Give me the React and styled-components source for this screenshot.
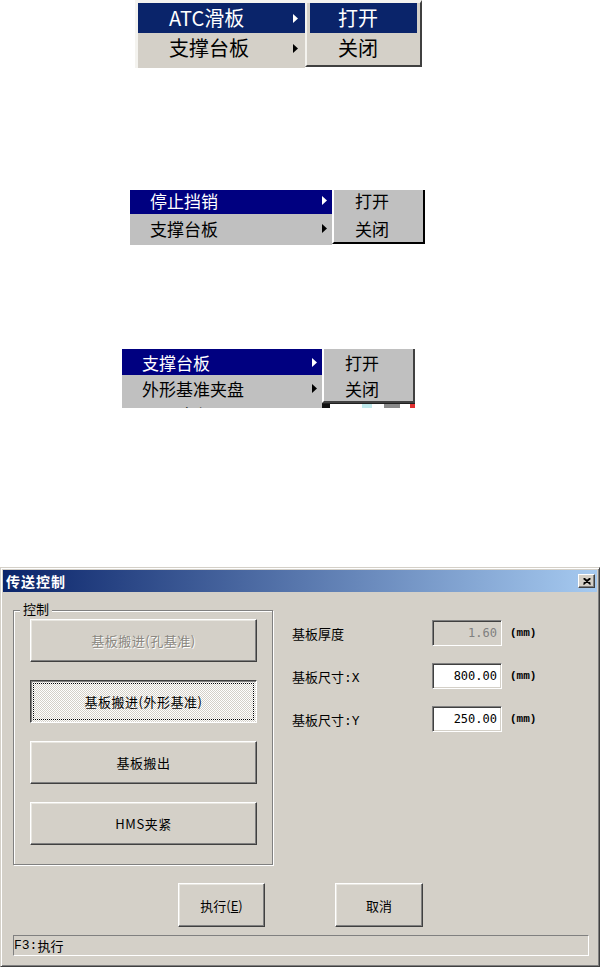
import React from "react";
import styled, { createGlobalStyle } from "styled-components";

const GlobalStyle = createGlobalStyle`
  html, body {
    margin: 0;
    padding: 0;
    background: #fff;
  }
  body {
    font-family: "Noto Sans CJK SC", "Noto Sans", sans-serif;
  }
`;

const Arrow = ({ color }) => (
  <svg width="5" height="9" viewBox="0 0 5 9">
    <polygon points="0,0 5,4.5 0,9" fill={color} />
  </svg>
);

const CloseIcon = () => (
  <svg width="8" height="7" viewBox="0 0 8 7">
    <path d="M0.5 0.5 L7.5 6.5 M1.5 0.5 L7.5 5.5 M7.5 0.5 L0.5 6.5 M6.5 0.5 L0.5 5.5" stroke="#000" strokeWidth="1.2" />
  </svg>
);

const App = () => {
  return (
    <Page>
      <GlobalStyle />

      {/* 菜单截图 1 */}
      <Shot $left={135} $top={0} $height={68}>
        <MainMenu $width={170} $bg="#d4d0c8" $frame={3}>
          <MenuRow $h={30} $font={20} $pad={31} $right={7} $hi="#0a246a">
            <span>ATC滑板</span>
            <Arrow color="#fff" />
          </MenuRow>
          <MenuRow $h={30} $font={20} $pad={31} $right={7}>
            <span>支撑台板</span>
            <Arrow color="#000" />
          </MenuRow>
          <MenuRow $h={30} $font={20} $pad={31} $right={7}>
            <span>外形基准夹盘</span>
          </MenuRow>
        </MainMenu>
        <SubMenu $width={117} $bg="#d4d0c8" $top={3} $side={3} $light="#f4f3ef" $dark="#404040">
          <MenuRow $h={30} $font={20} $pad={28} $hi="#0a246a">
            <span>打开</span>
          </MenuRow>
          <MenuRow $h={30} $font={20} $pad={28}>
            <span>关闭</span>
          </MenuRow>
        </SubMenu>
      </Shot>

      {/* 菜单截图 2 (上边被裁掉一点) */}
      <Shot $left={130} $top={122} $height={55}>
        <MainMenu $width={202} $bg="#c0c0c0" $frame={0}>
          <MenuRow $h={24} $font={17} $pad={20} $right={5} $lift={4} $hi="#000080">
            <span>停止挡销</span>
            <Arrow color="#fff" />
          </MenuRow>
          <MenuRow $h={28} $font={17} $pad={20} $right={5}>
            <span>支撑台板</span>
            <Arrow color="#000" />
          </MenuRow>
        </MainMenu>
        <SubMenu $width={93} $bg="#c0c0c0" $top={0} $side={0} $light="#fff" $dark="#000">
          <MenuRow $h={24} $font={17} $pad={21} $lift={4}>
            <span>打开</span>
          </MenuRow>
          <MenuRow $h={28} $font={17} $pad={21}>
            <span>关闭</span>
          </MenuRow>
        </SubMenu>
      </Shot>

      {/* 菜单截图 3 */}
      <Shot $left={122} $top={104} $height={59}>
        <MainMenu $width={200} $bg="#c0c0c0" $frame={0}>
          <MenuRow $h={26} $font={17} $pad={20} $right={5} $hi="#000080">
            <span>支撑台板</span>
            <Arrow color="#fff" />
          </MenuRow>
          <MenuRow $h={26} $font={17} $pad={20} $right={5}>
            <span>外形基准夹盘</span>
            <Arrow color="#000" />
          </MenuRow>
          <MenuRow $h={26} $font={17} $pad={20} $right={5}>
            <span>HMS夹紧</span>
          </MenuRow>
        </MainMenu>
        <SubColumn>
          <SubMenu $width={93} $bg="#c0c0c0" $top={0} $side={0} $light="#fff" $dark="#404040">
            <MenuRow $h={26} $font={17} $pad={21}>
              <span>打开</span>
            </MenuRow>
            <MenuRow $h={26} $font={17} $pad={21}>
              <span>关闭</span>
            </MenuRow>
          </SubMenu>
          <BehindStrip />
        </SubColumn>
      </Shot>

      {/* 传送控制 对话框 */}
      <Dialog>
        <TitleBar>
          <Title>传送控制</Title>
          <CloseButton>
            <CloseIcon />
          </CloseButton>
        </TitleBar>
        <Body>
          <TopRow>
            <GroupBox>
              <Legend>控制</Legend>
              <WideButton $state="disabled">基板搬进(孔基准)</WideButton>
              <WideButton $state="pushed">基板搬进(外形基准)</WideButton>
              <WideButton>基板搬出</WideButton>
              <WideButton>HMS夹紧</WideButton>
            </GroupBox>
            <Fields>
              <FieldRow>
                <FieldLabel>基板厚度</FieldLabel>
                <ValueBox $disabled>1.60</ValueBox>
                <Unit>(mm)</Unit>
              </FieldRow>
              <FieldRow>
                <FieldLabel>
                  基板尺寸<Mono>:X</Mono>
                </FieldLabel>
                <ValueBox>800.00</ValueBox>
                <Unit>(mm)</Unit>
              </FieldRow>
              <FieldRow>
                <FieldLabel>
                  基板尺寸<Mono>:Y</Mono>
                </FieldLabel>
                <ValueBox>250.00</ValueBox>
                <Unit>(mm)</Unit>
              </FieldRow>
            </Fields>
          </TopRow>
          <ActionRow>
            <ActionButton $w={87}>
              执行(<u>E</u>)
            </ActionButton>
            <ActionButton $w={88}>取消</ActionButton>
          </ActionRow>
          <StatusBar>
            <Mono>F3:</Mono>执行
          </StatusBar>
        </Body>
      </Dialog>
    </Page>
  );
};

export default App;

const Page = styled.div`
  width: 601px;
  height: 968px;
  overflow: hidden;
  display: flex;
  flex-direction: column;
`;

// 菜单截图
const Shot = styled.div`
  display: flex;
  align-items: flex-start;
  margin-left: ${(p) => p.$left}px;
  margin-top: ${(p) => p.$top}px;
  height: ${(p) => p.$height}px;
  overflow: hidden;
  flex-shrink: 0;
`;

const MainMenu = styled.div`
  display: flex;
  flex-direction: column;
  width: ${(p) => p.$width}px;
  min-height: 100%;
  box-sizing: border-box;
  background: ${(p) => p.$bg};
  border-top: ${(p) => p.$frame}px solid #f4f3ef;
  border-left: ${(p) => p.$frame}px solid #f4f3ef;
`;

const SubColumn = styled.div`
  display: flex;
  flex-direction: column;
`;

const SubMenu = styled.div`
  display: flex;
  flex-direction: column;
  width: ${(p) => p.$width}px;
  box-sizing: border-box;
  background: ${(p) => p.$bg};
  border-top: ${(p) => p.$top}px solid ${(p) => p.$light};
  border-left: 2px solid ${(p) => p.$light};
  border-right: 2px solid ${(p) => p.$dark};
  border-bottom: 2px solid ${(p) => p.$dark};
  padding: 0 ${(p) => p.$side}px ${(p) => (p.$side ? 2 : 0)}px ${(p) => (p.$side ? p.$side : 0)}px;
`;

const MenuRow = styled.div`
  display: flex;
  align-items: center;
  justify-content: space-between;
  flex-shrink: 0;
  box-sizing: border-box;
  height: ${(p) => p.$h}px;
  padding: 0 ${(p) => p.$right || 0}px ${(p) => p.$lift || 0}px ${(p) => p.$pad}px;
  font-size: ${(p) => p.$font}px;
  line-height: 1;
  background: ${(p) => p.$hi || "transparent"};
  color: ${(p) => (p.$hi ? "#fff" : "#000")};
  white-space: nowrap;
`;

const BehindStrip = styled.div`
  height: 6px;
  border-top: 1px solid #202020;
  background: linear-gradient(
    to right,
    #101010 0 8px,
    #ffffff 8px 40px,
    #bfe9ec 40px 50px,
    #ffffff 50px 62px,
    #8a8a8a 62px 78px,
    #ffffff 78px 88px,
    #e03030 88px 93px
  );
`;

// 对话框
const Dialog = styled.div`
  margin-top: 159px;
  width: 600px;
  height: 400px;
  flex-shrink: 0;
  box-sizing: border-box;
  display: flex;
  flex-direction: column;
  padding: 2px;
  background: #d4d0c8;
  border: 1px solid;
  border-color: #d4d0c8 #404040 #404040 #d4d0c8;
  box-shadow: inset 1px 1px #ffffff, inset -1px -1px #808080;
`;

const TitleBar = styled.div`
  display: flex;
  align-items: center;
  justify-content: space-between;
  height: 22px;
  padding: 0 2px 0 3px;
  background: linear-gradient(to right, #0a246a, #a6caf0);
`;

const Title = styled.span`
  color: #fff;
  font-size: 14px;
  font-weight: bold;
  letter-spacing: 1px;
  line-height: 1;
`;

const CloseButton = styled.div`
  width: 17px;
  height: 14px;
  box-sizing: border-box;
  display: flex;
  align-items: center;
  justify-content: center;
  background: #d4d0c8;
  border: 1px solid;
  border-color: #fff #404040 #404040 #fff;
  box-shadow: inset -1px -1px #808080;
`;

const Body = styled.div`
  flex: 1;
  display: flex;
  flex-direction: column;
  padding: 18px 8px 8px 10px;
`;

const TopRow = styled.div`
  display: flex;
  gap: 19px;
`;

const GroupBox = styled.div`
  position: relative;
  width: 260px;
  height: 255px;
  box-sizing: border-box;
  display: flex;
  flex-direction: column;
  gap: 18px;
  padding: 8px 0 0 16px;
  border: 1px solid #808080;
  box-shadow: 1px 1px 0 #fff, inset 1px 1px 0 #fff;
`;

const Legend = styled.span`
  position: absolute;
  top: -11px;
  left: 6px;
  padding: 0 3px;
  background: #d4d0c8;
  font-size: 13px;
  line-height: 18px;
  color: #000;
`;

const raised = `
  border: 1px solid;
  border-color: #fff #404040 #404040 #fff;
  box-shadow: inset -1px -1px #808080, inset 1px 1px #e8e6e0;
`;

const WideButton = styled.div`
  width: 227px;
  height: 43px;
  box-sizing: border-box;
  display: flex;
  align-items: center;
  justify-content: center;
  font-size: 13px;
  letter-spacing: 0.5px;
  background: #d4d0c8;
  color: #000;
  ${raised}

  ${(p) =>
    p.$state === "disabled" &&
    `
    color: #8a8780;
    text-shadow: 1px 1px 0 #fff;
  `}

  ${(p) =>
    p.$state === "pushed" &&
    `
    border-color: #404040 #fff #fff #404040;
    box-shadow: inset 1px 1px #808080;
    background-image: repeating-conic-gradient(#ffffff 0% 25%, #d4d0c8 0% 50%);
    background-size: 2px 2px;
    outline: 1px dotted #000;
    outline-offset: -4px;
  `}
`;

const Fields = styled.div`
  display: flex;
  flex-direction: column;
  gap: 17px;
  padding-top: 10px;
`;

const FieldRow = styled.div`
  display: flex;
  align-items: center;
  height: 26px;
`;

const FieldLabel = styled.span`
  width: 140px;
  font-size: 13px;
  color: #000;
`;

const ValueBox = styled.div`
  width: 70px;
  height: 26px;
  box-sizing: border-box;
  display: flex;
  align-items: center;
  justify-content: flex-end;
  padding-right: 4px;
  font-family: "DejaVu Sans Mono", "Liberation Mono", monospace;
  font-size: 12px;
  background: ${(p) => (p.$disabled ? "#d4d0c8" : "#fff")};
  color: ${(p) => (p.$disabled ? "#808080" : "#000")};
  border: 1px solid;
  border-color: #808080 #fff #fff #808080;
  box-shadow: inset 1px 1px #404040, inset -1px -1px #d4d0c8;
`;

const Unit = styled.span`
  margin-left: 8px;
  font-family: "Liberation Mono", monospace;
  font-size: 11px;
  font-weight: bold;
  color: #000;
`;

const Mono = styled.span`
  font-family: "Liberation Mono", monospace;
`;

const ActionRow = styled.div`
  display: flex;
  gap: 70px;
  margin-top: 18px;
  padding-left: 165px;
`;

const ActionButton = styled.div`
  width: ${(p) => p.$w}px;
  height: 44px;
  box-sizing: border-box;
  display: flex;
  align-items: center;
  justify-content: center;
  font-size: 13px;
  background: #d4d0c8;
  color: #000;
  ${raised}
`;

const StatusBar = styled.div`
  margin-top: 8px;
  height: 21px;
  box-sizing: border-box;
  display: flex;
  align-items: center;
  font-size: 13px;
  color: #000;
  border: 1px solid;
  border-color: #808080 #fff #fff #808080;
`;
